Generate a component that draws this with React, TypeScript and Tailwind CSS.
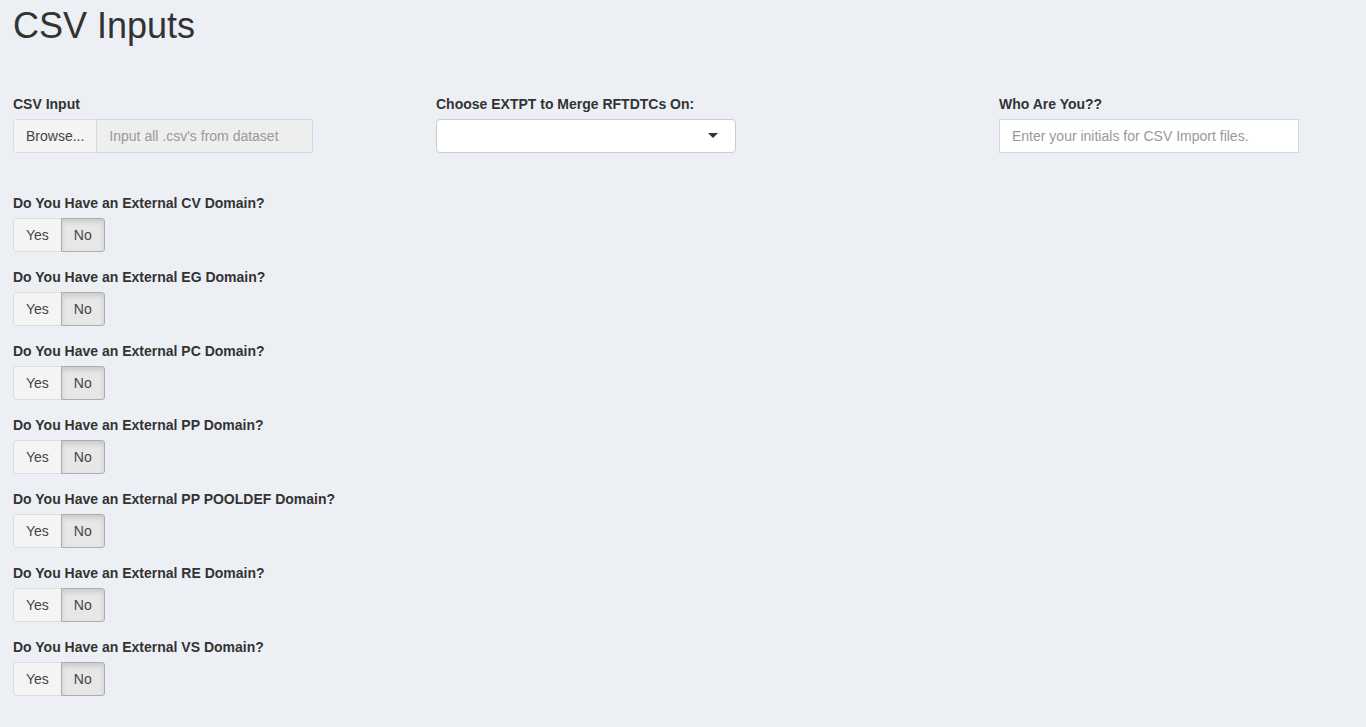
const domains = ['CV', 'EG', 'PC', 'PP', 'PP POOLDEF', 'RE', 'VS'];

function YesNo() {
  return (
    <div className="flex">
      <button className="h-[34px] px-3 bg-[#f4f4f4] border border-[#ddd] rounded-l-[3px] text-[#444] text-sm leading-5">
        Yes
      </button>
      <button className="h-[34px] px-3 -ml-px bg-[#e7e7e7] border border-[#adadad] rounded-r-[3px] text-[#444] text-sm leading-5 shadow-[inset_0_3px_5px_rgba(0,0,0,0.125)]">
        No
      </button>
    </div>
  );
}

export default function App() {
  return (
    <div className="min-h-[727px] bg-[#ecf0f5] px-[13px] pt-[6px] text-[#333] font-['Liberation_Sans',Arial,sans-serif] text-sm">
      <h1 className="text-[36px] leading-[1.1] font-normal">CSV Inputs</h1>

      {/* Top inputs */}
      <div className="grid grid-cols-[423px_563px_1fr] mt-[48px]">
        <div>
          <label className="block font-bold leading-5 mb-[5px]">CSV Input</label>
          <div className="flex w-[300px] h-[34px]">
            <button className="px-3 bg-[#f4f4f4] border border-[#ddd] rounded-l-[3px] text-[#444] leading-5">
              Browse...
            </button>
            <input
              readOnly
              placeholder="Input all .csv's from dataset"
              className="flex-1 min-w-0 -ml-px px-3 bg-[#eee] border border-[#d2d6de] rounded-r-[3px] placeholder:text-[#999] outline-none"
            />
          </div>
        </div>
        <div>
          <label className="block font-bold leading-5 mb-[5px]">Choose EXTPT to Merge RFTDTCs On:</label>
          <div className="w-[300px] h-[34px] bg-white border border-[#ccc] rounded-[4px] flex items-center justify-end pr-[17px]">
            <svg width="10" height="6" viewBox="0 0 10 6">
              <path d="M0 0 L10 0 L5 5 Z" fill="#333" />
            </svg>
          </div>
        </div>
        <div>
          <label className="block font-bold leading-5 mb-[5px]">Who Are You??</label>
          <input
            placeholder="Enter your initials for CSV Import files."
            className="w-[300px] h-[34px] px-3 bg-white border border-[#d2d6de] placeholder:text-[#999] outline-none"
          />
        </div>
      </div>

      {/* Domain toggles */}
      <div className="mt-[40px] flex flex-col gap-[15px]">
        {domains.map((d) => (
          <div key={d}>
            <label className="block font-bold leading-5 mb-[5px]">Do You Have an External {d} Domain?</label>
            <YesNo />
          </div>
        ))}
      </div>
    </div>
  );
}
